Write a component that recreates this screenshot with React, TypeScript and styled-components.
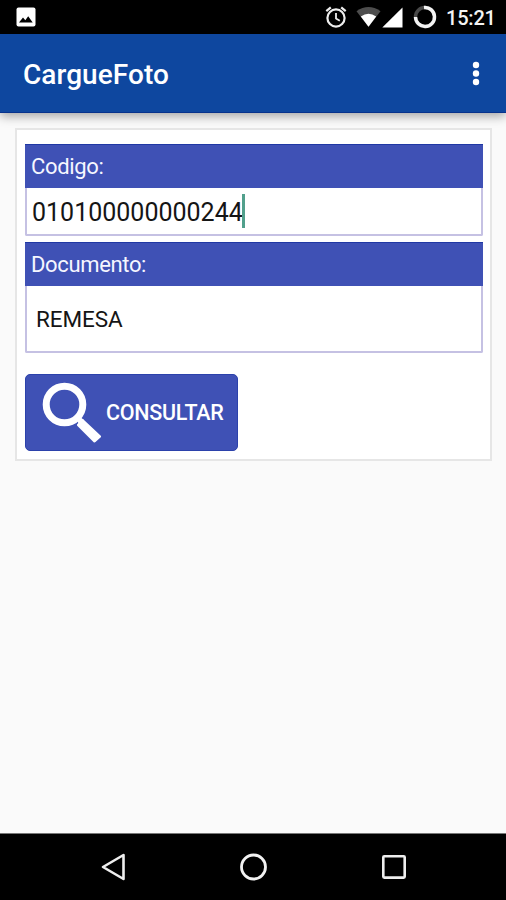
import React from 'react';
import styled, { createGlobalStyle } from 'styled-components';

const GlobalStyle = createGlobalStyle`
  *, *::before, *::after { box-sizing: border-box; }
  html, body { margin: 0; padding: 0; }
  body { font-family: Roboto, "Liberation Sans", sans-serif; }
  svg { display: block; flex: none; }
`;

const Screen = styled.div`
  display: flex;
  flex-direction: column;
  width: 506px;
  height: 900px;
  overflow: hidden;
  background: #fafafa;
`;

const StatusBar = styled.header`
  display: flex;
  align-items: center;
  justify-content: space-between;
  flex: none;
  height: 34px;
  padding: 0 10px 0 16px;
  background: #000;
`;

const StatusIcons = styled.div`
  display: flex;
  align-items: center;
  height: 34px;
`;

const WifiBox = styled.div`
  margin-left: 9px;
`;

const SignalBox = styled.div`
  margin: 1px 10px 0 1px;
`;

const Clock = styled.span`
  width: 50px;
  margin-left: 9px;
  padding-top: 2px;
  color: #f4f4f4;
  font-size: 20px;
  font-weight: 500;
  line-height: 24px;
  letter-spacing: -0.2px;
  white-space: nowrap;
`;

const AppBar = styled.div`
  display: flex;
  align-items: center;
  justify-content: space-between;
  flex: none;
  z-index: 1;
  height: 79px;
  padding: 0 26px 0 23px;
  background: #0e479f;
  border-bottom: 1px solid #07328c;
  box-shadow: 0 3px 10px rgba(0, 0, 0, 0.36);
`;

const Title = styled.h1`
  margin: 4px 0 0;
  color: #fff;
  font-size: 28px;
  font-weight: 500;
  line-height: 32px;
  letter-spacing: 0.05px;
`;

const MenuButton = styled.button`
  display: flex;
  padding: 0;
  border: 0;
  background: none;
`;

const Content = styled.main`
  flex: 1;
  padding: 15px 14px 0 15px;
`;

const Card = styled.form`
  display: flex;
  flex-direction: column;
  align-items: flex-start;
  height: 333px;
  padding: 14px 7px 0 8px;
  background: #fff;
  border: 2px solid #e6e6e6;
`;

const Field = styled.div<{ $height: number; $gap: number }>`
  display: flex;
  flex-direction: column;
  width: 100%;
  height: ${(p) => p.$height}px;
  margin-bottom: ${(p) => p.$gap}px;
`;

const Label = styled.label`
  height: 44px;
  padding: 2px 6px 0;
  background: #3f51b5;
  border-top: 1px solid #2038a4;
  color: #f5f6ff;
  font-size: 22px;
  line-height: 40px;
  letter-spacing: -0.35px;
`;

const Value = styled.div<{ $size: number; $inset: number; $spacing: number; $drop?: number }>`
  display: flex;
  align-items: center;
  flex: 1;
  padding-top: ${(p) => p.$drop ?? 0}px;
  padding-left: ${(p) => p.$inset}px;
  border: 2px solid #c5c1e3;
  border-top: 0;
  border-radius: 0 0 2px 2px;
  color: #151515;
  font-size: ${(p) => p.$size}px;
  letter-spacing: ${(p) => p.$spacing}px;
`;

const Caret = styled.span`
  width: 3px;
  height: 34px;
  margin: 0 0 3px -1px;
  background: #51a08c;
`;

const ConsultButton = styled.button`
  display: flex;
  align-items: center;
  width: 213px;
  height: 77px;
  padding: 0 0 0 16px;
  border: 1px solid #2c42ab;
  border-radius: 5px;
  background: #3f51b5;
  color: #fff;
  font: 500 21.5px Roboto, sans-serif;
`;

const ButtonText = styled.span`
  margin-left: 3px;
  letter-spacing: -0.3px;
`;

const NavBar = styled.nav`
  display: grid;
  grid-template-columns: 183px 141px 182px;
  align-items: center;
  flex: none;
  height: 67px;
  background: #000;
  border-top: 1px solid #777;
`;

const NavItem = styled.div<{ $start: number }>`
  padding-left: ${(p) => p.$start}px;
`;

const PhotoIcon = () => (
  <svg width="20" height="20" viewBox="0 0 20 20">
    <rect x=".5" y=".5" width="19" height="19" rx="2" fill="#fff" />
    <path d="M3 15.5 7 10.5 9.3 13.3 12.2 9.3 16.7 15.5Z" fill="#000" />
  </svg>
);

const AlarmIcon = () => (
  <svg width="22" height="22" viewBox="0 0 22 22" fill="none" stroke="#eee">
    <circle cx="11" cy="12" r="8.6" strokeWidth="2.2" />
    <path d="M11 7v5.5l3.8 2.2" strokeWidth="1.8" />
    <path d="M1.3 5.2 5.8 1.4M20.7 5.2 16.2 1.4" strokeWidth="2.2" />
  </svg>
);

const WifiIcon = () => (
  <svg width="25" height="22" viewBox="0 0 25 22">
    <path d="M.5 5.2Q12.5-3 24.5 5.2L12.5 20.8Z" fill="#4d4d4d" />
    <path d="M4.8 10.5Q12.5 5 20.2 10.5L12.5 20.8Z" fill="#fff" />
  </svg>
);

const SignalIcon = () => (
  <svg width="21" height="21" viewBox="0 0 21 21">
    <path d="M20.5.5v20H.3Z" fill="#fff" />
  </svg>
);

const BatteryIcon = () => (
  <svg width="24" height="24" viewBox="0 0 24 24" fill="none">
    <circle cx="12" cy="12" r="9.5" stroke="#484848" strokeWidth="3.4" />
    <path d="M11 2.5A9.5 9.5 0 1 1 2.5 12" stroke="#f4f4f4" strokeWidth="3.4" />
  </svg>
);

const DotsIcon = () => (
  <svg width="8" height="25" viewBox="0 0 8 25" fill="#fff">
    <circle cx="4" cy="4" r="3.2" />
    <circle cx="4" cy="12.5" r="3.2" />
    <circle cx="4" cy="21" r="3.2" />
  </svg>
);

const SearchIcon = () => (
  <svg width="61" height="61" viewBox="0 0 61 61">
    <circle cx="22.5" cy="22.5" r="18.3" fill="none" stroke="#fff" strokeWidth="7" />
    <path d="M34 37 37 34 42 38 37 42Z" fill="#fff" />
    <path
      d="M40.5 38.5 57.5 54.5 52.5 59 36.5 43Z"
      fill="#fff"
      stroke="#fff"
      strokeWidth="3"
      strokeLinejoin="round"
    />
  </svg>
);

export default function App() {
  return (
    <Screen>
      <GlobalStyle />
      <StatusBar>
        <PhotoIcon />
        <StatusIcons>
          <AlarmIcon />
          <WifiBox><WifiIcon /></WifiBox>
          <SignalBox><SignalIcon /></SignalBox>
          <BatteryIcon />
          <Clock>15:21</Clock>
        </StatusIcons>
      </StatusBar>
      <AppBar>
        <Title>CargueFoto</Title>
        <MenuButton type="button" aria-label="Menu"><DotsIcon /></MenuButton>
      </AppBar>
      <Content>
        <Card>
          <Field $height={92} $gap={6}>
            <Label>Codigo:</Label>
            <Value $size={25} $inset={5} $spacing={0} $drop={3}>010100000000244<Caret /></Value>
          </Field>
          <Field $height={111} $gap={21}>
            <Label>Documento:</Label>
            <Value $size={22.5} $inset={9} $spacing={-0.1} $drop={1}>REMESA</Value>
          </Field>
          <ConsultButton type="button">
            <SearchIcon />
            <ButtonText>CONSULTAR</ButtonText>
          </ConsultButton>
        </Card>
      </Content>
      <NavBar>
        <NavItem $start={101}>
          <svg width="25" height="28" viewBox="0 0 25 28">
            <path d="M22.5 2v24L2 14Z" fill="none" stroke="#eee" strokeWidth="2.6" strokeLinejoin="round" />
          </svg>
        </NavItem>
        <NavItem $start={56}>
          <svg width="28" height="28" viewBox="0 0 28 28">
            <circle cx="14.5" cy="14" r="12" fill="none" stroke="#f2f2f2" strokeWidth="2.8" />
          </svg>
        </NavItem>
        <NavItem $start={57}>
          <svg width="26" height="26" viewBox="0 0 26 26">
            <rect x="2.3" y="2.2" width="21.4" height="21.4" rx="1" fill="none" stroke="#eee" strokeWidth="2.6" />
          </svg>
        </NavItem>
      </NavBar>
    </Screen>
  );
}
